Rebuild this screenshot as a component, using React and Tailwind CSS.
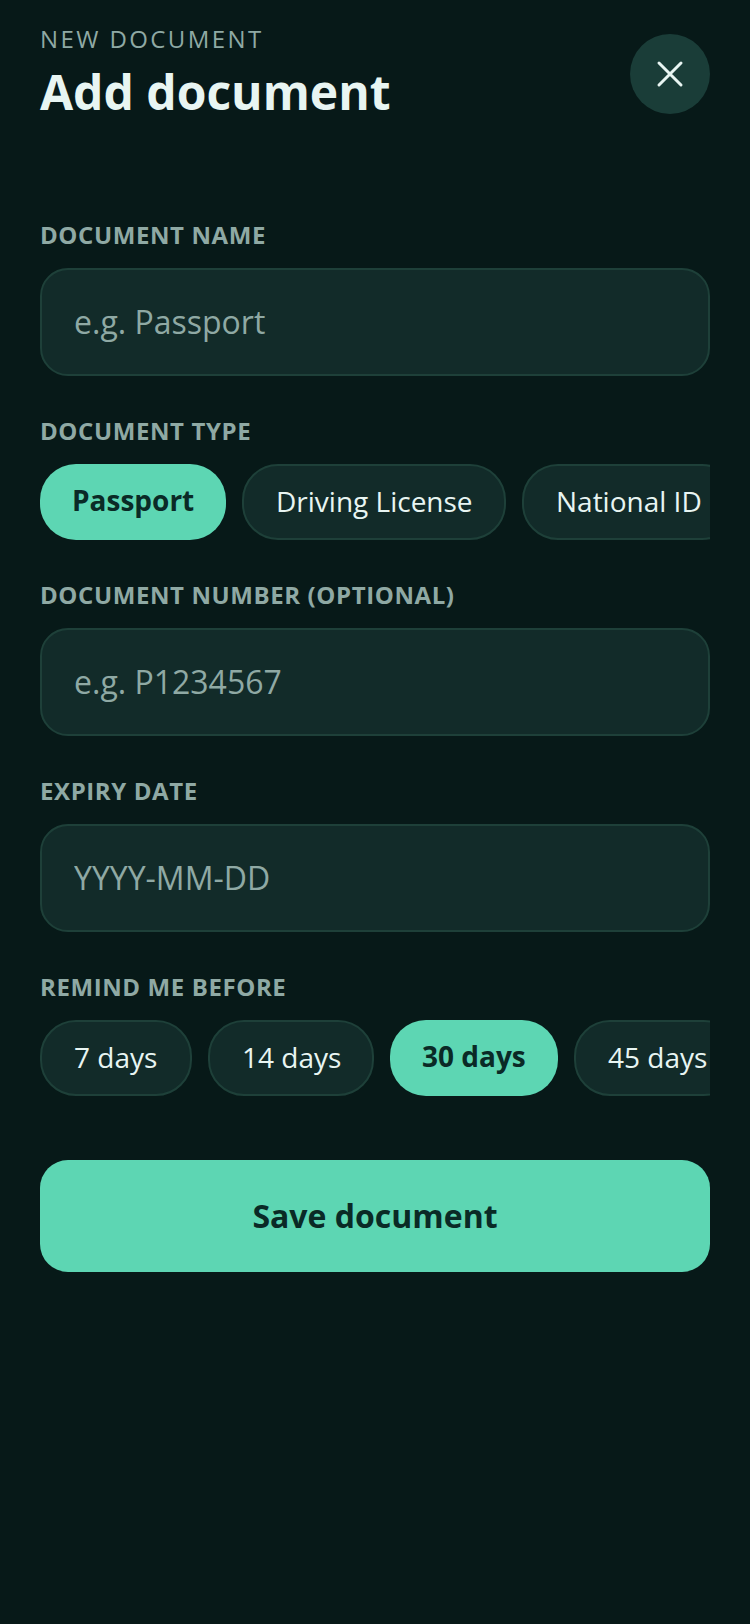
import React from "react";

const font = { fontFamily: '"Open Sans", sans-serif' };

function Label({ children }) {
  return <div className="text-[24px] leading-[30px] font-bold tracking-[0.6px] text-[#8fa9a4] mb-[18px]">{children}</div>;
}

function Field({ label, placeholder }) {
  return (
    <div className="mb-[40px]">
      <Label>{label}</Label>
      <input
        readOnly
        placeholder={placeholder}
        className="block w-full h-[108px] rounded-[28px] border-2 border-[#1e4039] bg-[#122b29] px-[32px] pb-[2px] text-[32px] text-white placeholder:text-[#8fa9a4] outline-none"
      />
    </div>
  );
}

function Chip({ children, active, width }) {
  return active ? (
    <div className={`shrink-0 rounded-[36px] bg-[#5dd6b3] px-[32px] py-[18px] text-[28px] leading-[36px] font-bold text-[#0a2a26] whitespace-nowrap ${width}`}>{children}</div>
  ) : (
    <div className={`shrink-0 rounded-[36px] border-2 border-[#1e4039] bg-[#122b29] px-[32px] pt-[17px] pb-[19px] text-[28px] leading-[36px] text-[#e8f5f2] whitespace-nowrap ${width}`}>{children}</div>
  );
}

function Chips({ items, active }) {
  return (
    <div className="flex gap-[16px] overflow-hidden mb-[40px]">
      {items.map(([t, w]) => (
        <Chip key={t} active={t === active} width={w}>{t}</Chip>
      ))}
    </div>
  );
}

const typeItems = [
  ["Passport", "w-[186px]"],
  ["Driving License", "w-[264px]"],
  ["National ID", "w-[216px]"],
  ["Visa", "w-[120px]"],
];

const remindItems = [
  ["7 days", "w-[152px]"],
  ["14 days", "w-[166px] text-center"],
  ["30 days", "w-[168px]"],
  ["45 days", "w-[166px]"],
  ["60 days", "w-[166px]"],
];

export default function App() {
  return (
    <div style={font} className="min-h-[1624px] bg-[#071918] px-[40px] pt-[23px]">
      <div className="flex items-start justify-between mb-[96px]">
        <div>
          <div className="text-[24px] leading-[32px] tracking-[2.4px] text-[#8fa9a4]">NEW DOCUMENT</div>
          <div className="text-[48px] leading-[64px] font-bold text-[#e8f5f2] mt-[5px]">Add document</div>
        </div>
        <button className="mt-[11px] w-[80px] h-[80px] rounded-full bg-[#1a3d38] flex items-center justify-center">
          <svg width="28" height="28" viewBox="0 0 28 28" fill="none" stroke="#e8f5f2" strokeWidth="3" strokeLinecap="round">
            <path d="M3 3L25 25M25 3L3 25" />
          </svg>
        </button>
      </div>
      <Field label="DOCUMENT NAME" placeholder="e.g. Passport" />
      <Label>DOCUMENT TYPE</Label>
      <Chips items={typeItems} active="Passport" />
      <Field label="DOCUMENT NUMBER (OPTIONAL)" placeholder="e.g. P1234567" />
      <Field label="EXPIRY DATE" placeholder="YYYY-MM-DD" />
      <Label>REMIND ME BEFORE</Label>
      <Chips items={remindItems} active="30 days" />
      <button className="mt-[24px] w-full h-[112px] rounded-[28px] bg-[#5dd6b3] text-[32px] font-bold text-[#0a2a26]">Save document</button>
    </div>
  );
}
